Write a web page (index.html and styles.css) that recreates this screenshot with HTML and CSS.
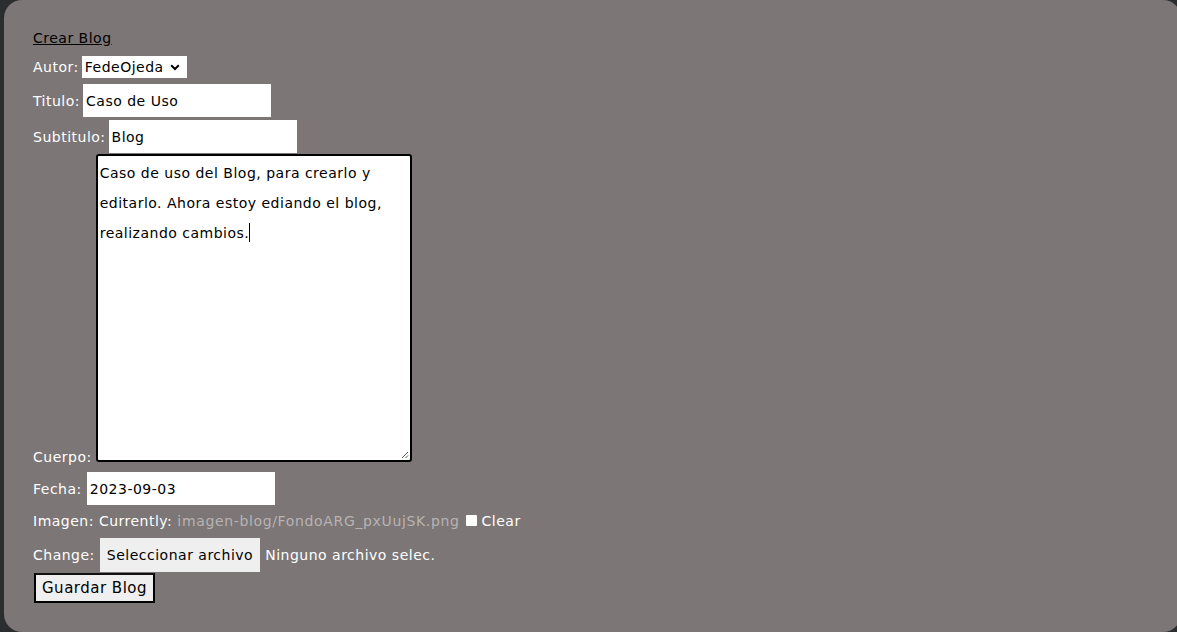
FILE: index.html
```html
<!DOCTYPE html>
<html lang="es">
<head>
<meta charset="utf-8">
<title>Crear Blog</title>
<link rel="stylesheet" href="styles.css">
</head>
<body>
<main class="panel">
  <form class="blog-form">
    <div class="row row-title"><a class="title-link" href="#">Crear Blog</a></div>
    <div class="row row-autor tight">
      <label class="lbl">Autor:</label>
      <span class="select">FedeOjeda<svg class="chev" width="10" height="7" viewBox="0 0 10 7"><path d="M1.2 1.3 L5 5 L8.8 1.3" fill="none" stroke="#000" stroke-width="2"/></svg></span>
    </div>
    <div class="row row-titulo tight">
      <label class="lbl">Titulo:</label>
      <span class="field">Caso de Uso</span>
    </div>
    <div class="row row-sub tight">
      <label class="lbl">Subtitulo:</label>
      <span class="field">Blog</span>
    </div>
    <div class="row row-cuerpo">
      <label class="lbl">Cuerpo:</label>
      <div class="textarea">Caso de uso del Blog, para crearlo y editarlo. Ahora estoy ediando el blog, realizando cambios.<span class="caret"></span>
        <svg class="grip" width="9" height="9" viewBox="0 0 9 9"><path d="M8 2 L2 8 M8 5.5 L5.5 8" stroke="#555" stroke-width="1"/></svg>
      </div>
    </div>
    <div class="row row-fecha">
      <label class="lbl">Fecha:</label>
      <span class="field">2023-09-03</span>
    </div>
    <div class="row row-imagen">
      <span class="lbl">Imagen: Currently:</span>
      <a class="file-link" href="#">imagen-blog/FondoARG_pxUujSK.png</a>
      <span class="check"></span>
      <span class="lbl">Clear</span>
    </div>
    <div class="row row-change">
      <span class="lbl">Change:</span>
      <span class="file-btn">Seleccionar archivo</span>
      <span class="lbl">Ninguno archivo selec.</span>
    </div>
    <div class="row row-submit">
      <button class="submit" type="button">Guardar Blog</button>
    </div>
  </form>
</main>
</body>
</html>
```

FILE: styles.css
```css
html, body {
  margin: 0;
  padding: 0;
}
body {
  background: #2b2d2f;
  height: 632px;
  overflow: hidden;
  font-family: "DejaVu Sans", "Open Sans", sans-serif;
  font-size: 14px;
  letter-spacing: 0.5px;
}
.panel {
  margin-left: 4px;
  width: 1177px;
  height: 632px;
  box-sizing: border-box;
  background: #7c7676;
  border-radius: 18px;
  padding: 28px 29px;
}
.blog-form {
  display: flex;
  flex-direction: column;
  align-items: flex-start;
}
.row {
  display: flex;
  align-items: center;
  gap: 5px;
  color: #fff;
}
.row.tight {
  gap: 3px;
}
.lbl {
  color: #fff;
  white-space: nowrap;
}
.row-title {
  height: 22px;
  margin-top: -1px;
}
.title-link {
  color: #000;
  text-decoration: underline;
}
.row-autor {
  margin-top: 7px;
  height: 22px;
}
.select {
  display: flex;
  align-items: center;
  gap: 6px;
  height: 22px;
  padding: 0 7px 0 3px;
  background: #fff;
  color: #000;
}
.row-titulo {
  margin-top: 6px;
}
.row-sub {
  margin-top: 3px;
}
.field {
  display: flex;
  align-items: center;
  width: 188px;
  height: 33px;
  box-sizing: border-box;
  padding: 0 3px;
  background: #fff;
  color: #000;
}
.row-cuerpo {
  margin-top: 1px;
  align-items: flex-end;
  gap: 4px;
}
.row-cuerpo .lbl {
  margin-bottom: -3px;
}
.textarea {
  position: relative;
  width: 316px;
  height: 308px;
  box-sizing: border-box;
  border: 2px solid #000;
  border-radius: 3px;
  background: #fff;
  color: #000;
  padding: 2px 2px;
  line-height: 30px;
}
.caret {
  display: inline-block;
  width: 1px;
  height: 19px;
  background: #000;
  vertical-align: -4px;
}
.grip {
  position: absolute;
  right: 1px;
  bottom: 1px;
}
.row-fecha {
  margin-top: 10px;
}
.row-imagen {
  margin-top: 5px;
  height: 22px;
  gap: 5px;
}
.file-link {
  color: #b8b3b3;
  text-decoration: none;
  letter-spacing: 0.65px;
}
.check {
  width: 11px;
  height: 11px;
  margin-left: 1px;
  background: #fff;
  border-radius: 1px;
  align-self: center;
  margin-top: -2px;
}
.row-change {
  margin-top: 6px;
}
.file-btn {
  display: flex;
  align-items: center;
  height: 34px;
  padding: 0 7px;
  background: #efefef;
  color: #000;
}
.row-submit {
  margin-top: 1px;
  margin-left: 1px;
}
.submit {
  height: 30px;
  padding: 0 6px;
  border: 2px solid #000;
  border-top-color: #111;
  background: #efefef;
  color: #000;
  font-family: inherit;
  font-size: 15px;
  letter-spacing: 0.5px;
}
```
